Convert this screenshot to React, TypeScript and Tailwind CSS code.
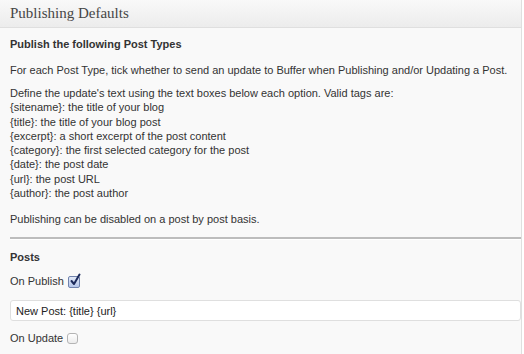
export default function App() {
  return (
    <div className="w-[524px] h-[354px] overflow-hidden bg-white">
      <div className="w-[522px] h-full border-r border-[#dfdfdf] bg-[#f9f9f9] font-['Liberation_Sans',Arial,sans-serif] text-[11px] text-[#333]">
        <div className="h-[28px] border-b border-[#dfdfdf] bg-gradient-to-b from-[#f9f9f9] to-[#ececec] px-[10px] flex items-center">
          <h3 className="font-['Liberation_Serif',Georgia,serif] text-[15px] text-[#464646] leading-none -mt-[1px]">Publishing Defaults</h3>
        </div>
        <div className="pl-[10px]">
          <p className="font-bold mt-[9px] leading-[14px]">Publish the following Post Types</p>
          <p className="mt-[12px] leading-[14px] whitespace-nowrap">
            For each Post Type, tick whether to send an update to Buffer when Publishing and/or Updating a Post.
          </p>
          <div className="mt-[9px] leading-[14.3px] whitespace-nowrap">
            <div>Define the update's text using the text boxes below each option. Valid tags are:</div>
            <div>{'{sitename}'}: the title of your blog</div>
            <div>{'{title}'}: the title of your blog post</div>
            <div>{'{excerpt}'}: a short excerpt of the post content</div>
            <div>{'{category}'}: the first selected category for the post</div>
            <div>{'{date}'}: the post date</div>
            <div>{'{url}'}: the post URL</div>
            <div>{'{author}'}: the post author</div>
          </div>
          <p className="mt-[12px] leading-[14px]">Publishing can be disabled on a post by post basis.</p>
          <div className="mt-[11px] h-[3px] border-t-2 border-[#bdbdbd] border-b border-b-white" />
          <p className="font-bold mt-[10px] leading-[14px]">Posts</p>
          <label className="mt-[10px] flex items-center gap-[4px] leading-[14px]">
            <span>On Publish</span>
            <span className="w-[12px] h-[12px] mt-[2px] rounded-[2px] border border-[#6f82ad] bg-gradient-to-b from-[#e3eaf8] to-[#b5c6ea] relative">
              <svg width="12" height="13" viewBox="0 0 12 13" className="absolute -top-[4px] left-[0px]">
                <path d="M2.5 8 L5 11 L10.5 1.5" fill="none" stroke="#1d2b5c" strokeWidth="2" strokeLinecap="round" strokeLinejoin="round" />
              </svg>
            </span>
          </label>
          <div className="mt-[12px] h-[21px] border border-[#dfdfdf] rounded-[3px] bg-white flex items-center px-[5px] text-[#222]">
            New Post: {'{title}'} {'{url}'}
          </div>
          <label className="mt-[10px] flex items-center gap-[4px] leading-[14px]">
            <span>On Update</span>
            <span className="w-[11px] h-[11px] rounded-[3px] border border-[#b4b4b4] bg-gradient-to-b from-white to-[#ececec]" />
          </label>
        </div>
      </div>
    </div>
  );
}
